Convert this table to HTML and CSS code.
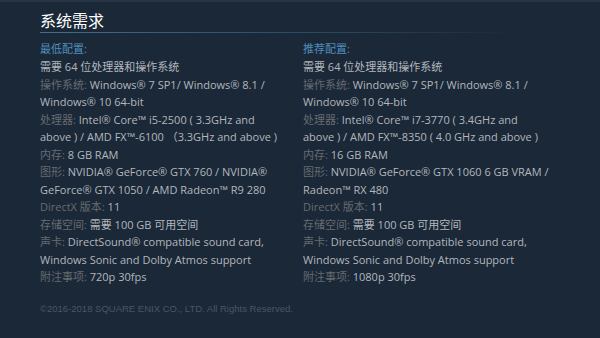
FILE: index.html
```html
<!DOCTYPE html>
<html lang="zh-CN">
<head>
<meta charset="utf-8">
<link rel="stylesheet" href="styles.css">
</head>
<body>
<div class="frame">
  <div class="page">
    <h2 class="title">系统需求</h2>
    <div class="cols">
      <div class="col left">
        <div class="head">最低配置:</div>
        <div class="item">需要 64 位处理器和操作系统</div>
        <div class="item"><span class="lbl">操作系统:</span> Windows® 7 SP1/ Windows® 8.1 /<br>Windows® 10 64-bit</div>
        <div class="item"><span class="lbl">处理器:</span> Intel® Core™ i5-2500 ( 3.3GHz and<br>above ) / AMD FX™-6100 （3.3GHz and above )</div>
        <div class="item"><span class="lbl">内存:</span> 8 GB RAM</div>
        <div class="item"><span class="lbl">图形:</span> NVIDIA® GeForce® GTX 760 / NVIDIA®<br>GeForce® GTX 1050 / AMD Radeon™ R9 280</div>
        <div class="item"><span class="lbl">DirectX 版本:</span> 11</div>
        <div class="item"><span class="lbl">存储空间:</span> 需要 100 GB 可用空间</div>
        <div class="item"><span class="lbl">声卡:</span> DirectSound® compatible sound card,<br>Windows Sonic and Dolby Atmos support</div>
        <div class="item"><span class="lbl">附注事项:</span> 720p 30fps</div>
      </div>
      <div class="col right">
        <div class="head">推荐配置:</div>
        <div class="item">需要 64 位处理器和操作系统</div>
        <div class="item"><span class="lbl">操作系统:</span> Windows® 7 SP1/ Windows® 8.1 /<br>Windows® 10 64-bit</div>
        <div class="item"><span class="lbl">处理器:</span> Intel® Core™ i7-3770 ( 3.4GHz and<br>above ) / AMD FX™-8350 ( 4.0 GHz and above )</div>
        <div class="item"><span class="lbl">内存:</span> 16 GB RAM</div>
        <div class="item"><span class="lbl">图形:</span> NVIDIA® GeForce® GTX 1060 6 GB VRAM /<br>Radeon™ RX 480</div>
        <div class="item"><span class="lbl">DirectX 版本:</span> 11</div>
        <div class="item"><span class="lbl">存储空间:</span> 需要 100 GB 可用空间</div>
        <div class="item"><span class="lbl">声卡:</span> DirectSound® compatible sound card,<br>Windows Sonic and Dolby Atmos support</div>
        <div class="item"><span class="lbl">附注事项:</span> 1080p 30fps</div>
      </div>
    </div>
    <div class="copy">©2016-2018 SQUARE ENIX CO., LTD. All Rights Reserved.</div>
  </div>
</div>
</body>
</html>
```

FILE: styles.css
```css
html, body {
  margin: 0;
  padding: 0;
}
body {
  width: 600px;
  height: 338px;
  overflow: hidden;
  background: #1b2838;
  font-family: "Open Sans", "Noto Sans CJK SC", sans-serif;
}
.frame {
  height: 338px;
  border-top: 2px solid #263445;
  box-sizing: border-box;
}
.page {
  padding: 9px 0 0 40px;
}
.title {
  margin: 0;
  font-weight: normal;
  font-size: 16px;
  line-height: 20px;
  color: #ffffff;
  background-image: linear-gradient(to right, #3f6f91 0%, rgba(63,111,145,0.35) 60%, rgba(63,111,145,0) 85%);
  background-repeat: no-repeat;
  background-size: 100% 1px;
  background-position: left bottom;
  padding-bottom: 2px;
}
.cols {
  display: flex;
  gap: 16px;
  padding-top: 8px;
}
.col {
  width: 247px;
  font-size: 11px;
  line-height: 17.5px;
  color: #b2b7bc;
  white-space: nowrap;
}
.head {
  color: #4f8fbd;
  line-height: 16px;
  margin-bottom: 1px;
}
.lbl {
  color: #666b70;
}
.copy {
  margin-top: 17px;
  font-family: "Liberation Sans", Arial, sans-serif;
  font-size: 9.5px;
  color: #4b5663;
}
```
